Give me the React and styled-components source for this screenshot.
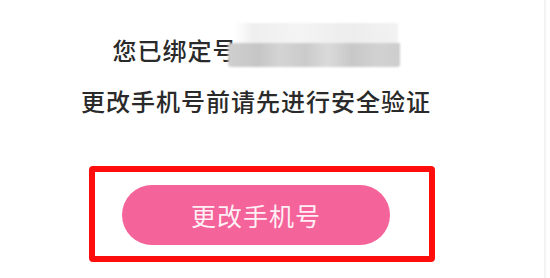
import React from 'react';
import styled, { createGlobalStyle } from 'styled-components';

const GlobalStyle = createGlobalStyle`
  html, body {
    margin: 0;
    padding: 0;
    background: #ffffff;
  }
  body {
    font-family: "Noto Sans CJK SC", "Noto Sans", sans-serif;
  }
`;

const Page = styled.div`
  width: 550px;
  height: 278px;
  display: flex;
  overflow: hidden;
  background: #ffffff;
`;

const Main = styled.div`
  width: 546px;
  box-sizing: border-box;
  padding: 35px 32px 0 0;
  border-right: 2px solid #f3f3f3;
  display: flex;
  flex-direction: column;
  align-items: center;
`;

const BoundRow = styled.div`
  display: flex;
  align-items: flex-start;
  height: 30px;
`;

const InfoText = styled.div`
  font-size: 24px;
  font-weight: 500;
  line-height: 30px;
  letter-spacing: 1px;
  color: #2a2a2a;
  white-space: nowrap;
  margin-top: ${(p) => p.$top || 0}px;
`;

const MaskedNumber = styled.span`
  position: relative;
  z-index: 1;
  display: block;
  width: 172px;
  height: 44px;
  margin: -12px 0 0 -10px;
  filter: blur(1.2px);
  background:
    linear-gradient(
      90deg,
      #cfcfcf 0%,
      #c6c6c6 18%,
      #d4d4d4 30%,
      #cbcbcb 45%,
      #dadada 58%,
      #c8c8c8 72%,
      #d2d2d2 88%,
      #cdcdcd 100%
    ) 0 20px / 100% 24px no-repeat,
    linear-gradient(
      90deg,
      rgba(238, 238, 238, 0) 0%,
      #efefef 12%,
      #f4f4f4 40%,
      #ededed 70%,
      #f2f2f2 100%
    ) 6px 0 / 164px 20px no-repeat;
  border-radius: 3px;
`;

const Highlight = styled.div`
  width: 346px;
  height: 96px;
  box-sizing: border-box;
  margin: 50px 0 0 12px;
  padding: 13px 0 0 27px;
  border: 6px solid #ff0d0d;
  border-radius: 4px;
`;

const ChangeButton = styled.button`
  width: 268px;
  height: 60px;
  border: none;
  border-radius: 30px;
  background: #f5639b;
  color: rgba(255, 255, 255, 0.92);
  font-family: "Noto Sans CJK SC", "Noto Sans", sans-serif;
  font-size: 25px;
  letter-spacing: 1px;
  padding: 0;
  cursor: pointer;
`;

export default function App() {
  return (
    <>
      <GlobalStyle />
      <Page>
        <Main>
          <BoundRow>
            <InfoText>您已绑定号</InfoText>
            <MaskedNumber />
          </BoundRow>
          <InfoText $top={21}>更改手机号前请先进行安全验证</InfoText>
          <Highlight>
            <ChangeButton>更改手机号</ChangeButton>
          </Highlight>
        </Main>
      </Page>
    </>
  );
}
